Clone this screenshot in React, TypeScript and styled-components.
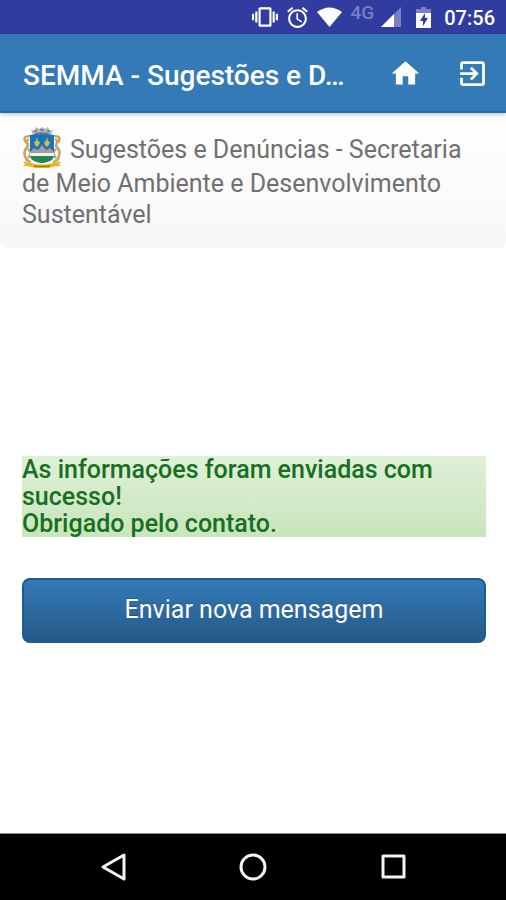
import React from "react";
import styled, { createGlobalStyle } from "styled-components";

const GlobalStyle = createGlobalStyle`
  *, *::before, *::after { box-sizing: border-box; }
  body {
    margin: 0;
    background: #fff;
    font-family: Roboto, "Liberation Sans", sans-serif;
  }
`;

const Screen = styled.div`
  display: flex;
  flex-direction: column;
  min-height: 100vh;
`;

const StatusBar = styled.div`
  display: flex;
  align-items: center;
  justify-content: flex-end;
  height: 34px;
  padding: 0 11px;
  background: #303c9f;
  color: #fff;
`;

const StatusIcon = styled.svg<{ $gap: number }>`
  flex: none;
  margin-right: ${({ $gap }) => $gap}px;
  fill: currentColor;
`;

const Network = styled.span`
  align-self: flex-start;
  margin: 3px 7px 0 0;
  font-size: 19px;
  line-height: 20px;
  font-weight: 500;
  color: #7780c2;
`;

const Clock = styled.time`
  padding-top: 2px;
  font-size: 20px;
  line-height: 32px;
  font-weight: 500;
`;

const AppBar = styled.header`
  position: relative;
  display: flex;
  align-items: center;
  height: 79px;
  padding: 2px 17px 0 23px;
  background: #337ab7;
  border-bottom: 2px solid #1f70b3;
  box-shadow: 0 2px 4px rgba(0, 0, 0, 0.22);
  color: #fff;
`;

const AppTitle = styled.h1`
  flex: 1;
  min-width: 0;
  margin: 4px 0 0;
  overflow: hidden;
  white-space: nowrap;
  text-overflow: ellipsis;
  font-size: 28px;
  line-height: 32px;
  font-weight: 500;
`;

const Actions = styled.nav`
  display: flex;
  gap: 34px;
`;

const IconButton = styled.button`
  display: block;
  padding: 0;
  border: 0;
  background: none;
  color: inherit;
  cursor: pointer;

  svg {
    display: block;
    fill: currentColor;
  }
`;

const Intro = styled.section`
  padding: 13px 22px 18px;
  border-radius: 0 0 8px 8px;
  background: linear-gradient(#fff, #f7f7f7);
`;

const IntroTitle = styled.h2`
  margin: 0;
  font-size: 25px;
  line-height: 31px;
  font-weight: 400;
  color: #707070;
`;

const Crest = styled.svg`
  margin-right: 8px;
  vertical-align: -10px;
`;

const Main = styled.main`
  flex: 1;
  display: flex;
  flex-direction: column;
  gap: 41px;
  padding: 208px 20px 40px 22px;
`;

const Alert = styled.p`
  margin: 0;
  background: linear-gradient(#dff0d8, #c8e5bc);
  color: #17701f;
  font-size: 25px;
  line-height: 27px;
  font-weight: 500;
`;

const SubmitButton = styled.button`
  height: 65px;
  padding: 0 16px 1px;
  border: 2px solid #1c5d90;
  border-radius: 8px;
  background: linear-gradient(#337ab7, #265a88);
  color: #fff;
  font: 400 25px/32px Roboto, "Liberation Sans", sans-serif;
  text-shadow: 0 -1px 0 rgba(0, 0, 0, 0.2);
  cursor: pointer;
`;

const SystemBar = styled.nav`
  display: grid;
  grid-template-columns: repeat(3, 1fr);
  place-items: center;
  height: 67px;
  padding: 0 43px;
  border-top: 1px solid #8a8a8a;
  background: #000;
  color: #f4f4f4;

  svg {
    fill: none;
    stroke: currentColor;
    stroke-width: 3;
    stroke-linejoin: round;
  }
`;

function CityCrest() {
  return (
    <Crest width="40" height="42" viewBox="0 0 40 42" role="img" aria-label="Brasão">
      <path d="M9 3l3 2 2-4 3 2 3-2 3 2 3-2 2 4 3-2-2 7q-9-2-18 0z" fill="#b4b8bb" />
      <path d="M12 5h3M18 4h4M25 5h3M13 8q7-2 14 0" stroke="#6d7378" strokeWidth="1.5" fill="none" />
      <path
        d="M8 10q-7 0-5 5 3 2 3 5-5 5-3 10 1 5 6 6M7 13q-4 2-1 5M6 23q5 4 0 9M32 10q7 0 5 5-3 2-3 5 5 5 3 10-1 5-6 6M33 13q4 2 1 5M34 23q-5 4 0 9"
        fill="none"
        stroke="#c5a468"
        strokeWidth="2.5"
      />
      <path d="M8 9q12-2 24 0v17q0 9-12 11Q8 35 8 26z" fill="#1675b8" />
      <path d="M8 26l4-4 4 2 4-5 4 5 4-2 4 4v3H8z" fill="#a59a9f" />
      <path d="M8 27h24v3H8z" fill="#f2f2ed" />
      <path d="M8 30h24q-1 6-12 7-11-1-12-7z" fill="#20885b" />
      <path d="M15 11l1 4 2 1-1 3-2 2-2-2-1-3 2-1zM25 11l1 4 2 1-1 3-2 2-2-2-1-3 2-1z" fill="#d8b84b" />
      <path d="M1 35l8 2q11 3 22 0l8-2-2 3 2 2q-8 0-12 2-7 1-14 0-4-2-12-2l2-2z" fill="#e9b51c" />
      <path d="M12 40q8 1 16 0" fill="none" stroke="#8c6817" strokeWidth="1" />
    </Crest>
  );
}

export default function App() {
  return (
    <>
      <GlobalStyle />
      <Screen>
        <StatusBar>
          <StatusIcon $gap={7} width="26" height="26" viewBox="0 0 24 24" aria-hidden="true">
            <path d="M0 15h2V9H0v6zm3 2h2V7H3v10zm19-8v6h2V9h-2zm-3 8h2V7h-2v10zM16.5 3h-9C6.67 3 6 3.67 6 4.5v15c0 .83.67 1.5 1.5 1.5h9c.83 0 1.5-.67 1.5-1.5v-15c0-.83-.67-1.5-1.5-1.5zM16 19H8V5h8v14z" />
          </StatusIcon>
          <StatusIcon $gap={7} width="25" height="25" viewBox="0 0 24 24" aria-hidden="true">
            <path d="M22 5.72l-4.6-3.86-1.29 1.53 4.6 3.86L22 5.72zM7.88 3.39L6.6 1.86 2 5.71l1.29 1.53 4.59-3.85zM12.5 8H11v6l4.75 2.85.75-1.23-4-2.37V8zM12 4c-4.97 0-9 4.03-9 9s4.02 9 9 9c4.97 0 9-4.03 9-9s-4.03-9-9-9zm0 16c-3.87 0-7-3.13-7-7s3.13-7 7-7 7 3.13 7 7-3.13 7-7 7z" />
          </StatusIcon>
          <StatusIcon $gap={9} width="25" height="20" viewBox="0 0 25 20" aria-hidden="true">
            <path d="M0 5Q12.500-4 25 5L12.500 20z" />
          </StatusIcon>
          <Network>4G</Network>
          <StatusIcon $gap={15} width="20" height="20" viewBox="0 0 20 20" aria-hidden="true">
            <path d="M20 0v20H0z" opacity="0.35" />
            <path d="M13 7v13H0z" />
          </StatusIcon>
          <StatusIcon $gap={13} width="15" height="21" viewBox="0 0 15 21" aria-hidden="true">
            <path d="M5 0h5v2h5v5H0V2h5z" opacity="0.35" />
            <path fillRule="evenodd" d="M0 6h15v15H0zM9 6l-5 8h3v5l5-8H9z" />
          </StatusIcon>
          <Clock>07:56</Clock>
        </StatusBar>

        <AppBar>
          <AppTitle>SEMMA - Sugestões e D…</AppTitle>
          <Actions>
            <IconButton type="button" aria-label="Início">
              <svg width="33" height="33" viewBox="0 0 24 24">
                <path d="M10 20v-6h4v6h5v-8h3L12 3 2 12h3v8z" />
              </svg>
            </IconButton>
            <IconButton type="button" aria-label="Sair">
              <svg width="33" height="33" viewBox="0 0 24 24">
                <path d="M10.09 15.59L11.5 17l5-5-5-5-1.41 1.41L12.67 11H3v2h9.67l-2.58 2.59zM19 3H5c-1.11 0-2 .9-2 2v4h2V5h14v14H5v-4H3v4c0 1.1.89 2 2 2h14c1.1 0 2-.9 2-2V5c0-1.1-.9-2-2-2z" />
              </svg>
            </IconButton>
          </Actions>
        </AppBar>

        <Intro>
          <IntroTitle>
            <CityCrest />
            Sugestões e Denúncias - Secretaria de Meio Ambiente e Desenvolvimento Sustentável
          </IntroTitle>
        </Intro>

        <Main>
          <Alert role="status">
            As informações foram enviadas com sucesso!
            <br />
            Obrigado pelo contato.
          </Alert>
          <SubmitButton type="button">Enviar nova mensagem</SubmitButton>
        </Main>

        <SystemBar>
          <IconButton type="button" aria-label="Voltar">
            <svg width="28" height="30" viewBox="0 0 28 30">
              <path d="M25 3v24L4 15z" />
            </svg>
          </IconButton>
          <IconButton type="button" aria-label="Tela inicial">
            <svg width="28" height="28" viewBox="0 0 28 28">
              <circle cx="14" cy="14" r="12" />
            </svg>
          </IconButton>
          <IconButton type="button" aria-label="Recentes">
            <svg width="28" height="28" viewBox="0 0 28 28">
              <path d="M4 3h21v21H4z" />
            </svg>
          </IconButton>
        </SystemBar>
      </Screen>
    </>
  );
}
